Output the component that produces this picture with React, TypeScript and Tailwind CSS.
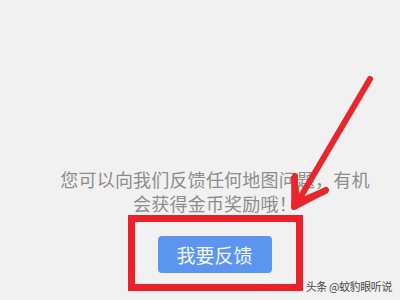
import React from 'react';

const Arrow: React.FC = () => (
  <svg className="absolute left-0 top-0 pointer-events-none" width="400" height="300" viewBox="0 0 400 300">
    <g stroke="#e9262b" strokeWidth="6" strokeLinecap="round" strokeLinejoin="round" fill="none">
      <line x1="370" y1="79" x2="297" y2="203" />
      <path d="M295 176 L294 207 L326 190" />
    </g>
    <path d="M291 176 L297 176 L300 198 L326 187 L328 193 L292 210 Z" fill="#e9262b" />
  </svg>
);

export default function App() {
  return (
    <div className="relative w-[400px] h-[300px] overflow-hidden bg-[#f2f1f1]" style={{ fontFamily: '"Noto Sans CJK SC", "Noto Sans", sans-serif' }}>
      <div className="flex flex-col items-center justify-end h-full pl-[30px] pb-[9px]">
        <p className="text-center text-[18px] leading-[24px] tracking-[0.2px] text-[#8d8d8d]">
          您可以向我们反馈任何地图问题，有机
          <br />
          会获得金币奖励哦！
        </p>
        <div className="border-[7px] border-[#ec2028] w-[175px] h-[76px] flex flex-col items-center pt-[14px] pr-[1px]">
          <button className="w-[114px] h-[37px] rounded-[4px] bg-[#5b95f0] text-[#f4f8ff] text-[19px] leading-none">
            我要反馈
          </button>
        </div>
      </div>
      <Arrow />
      <div className="absolute right-[8px] bottom-[8px] text-[11px] tracking-[-0.4px] leading-none text-[#4a4a4a]">
        头条 @蚊豹眼听说
      </div>
    </div>
  );
}
